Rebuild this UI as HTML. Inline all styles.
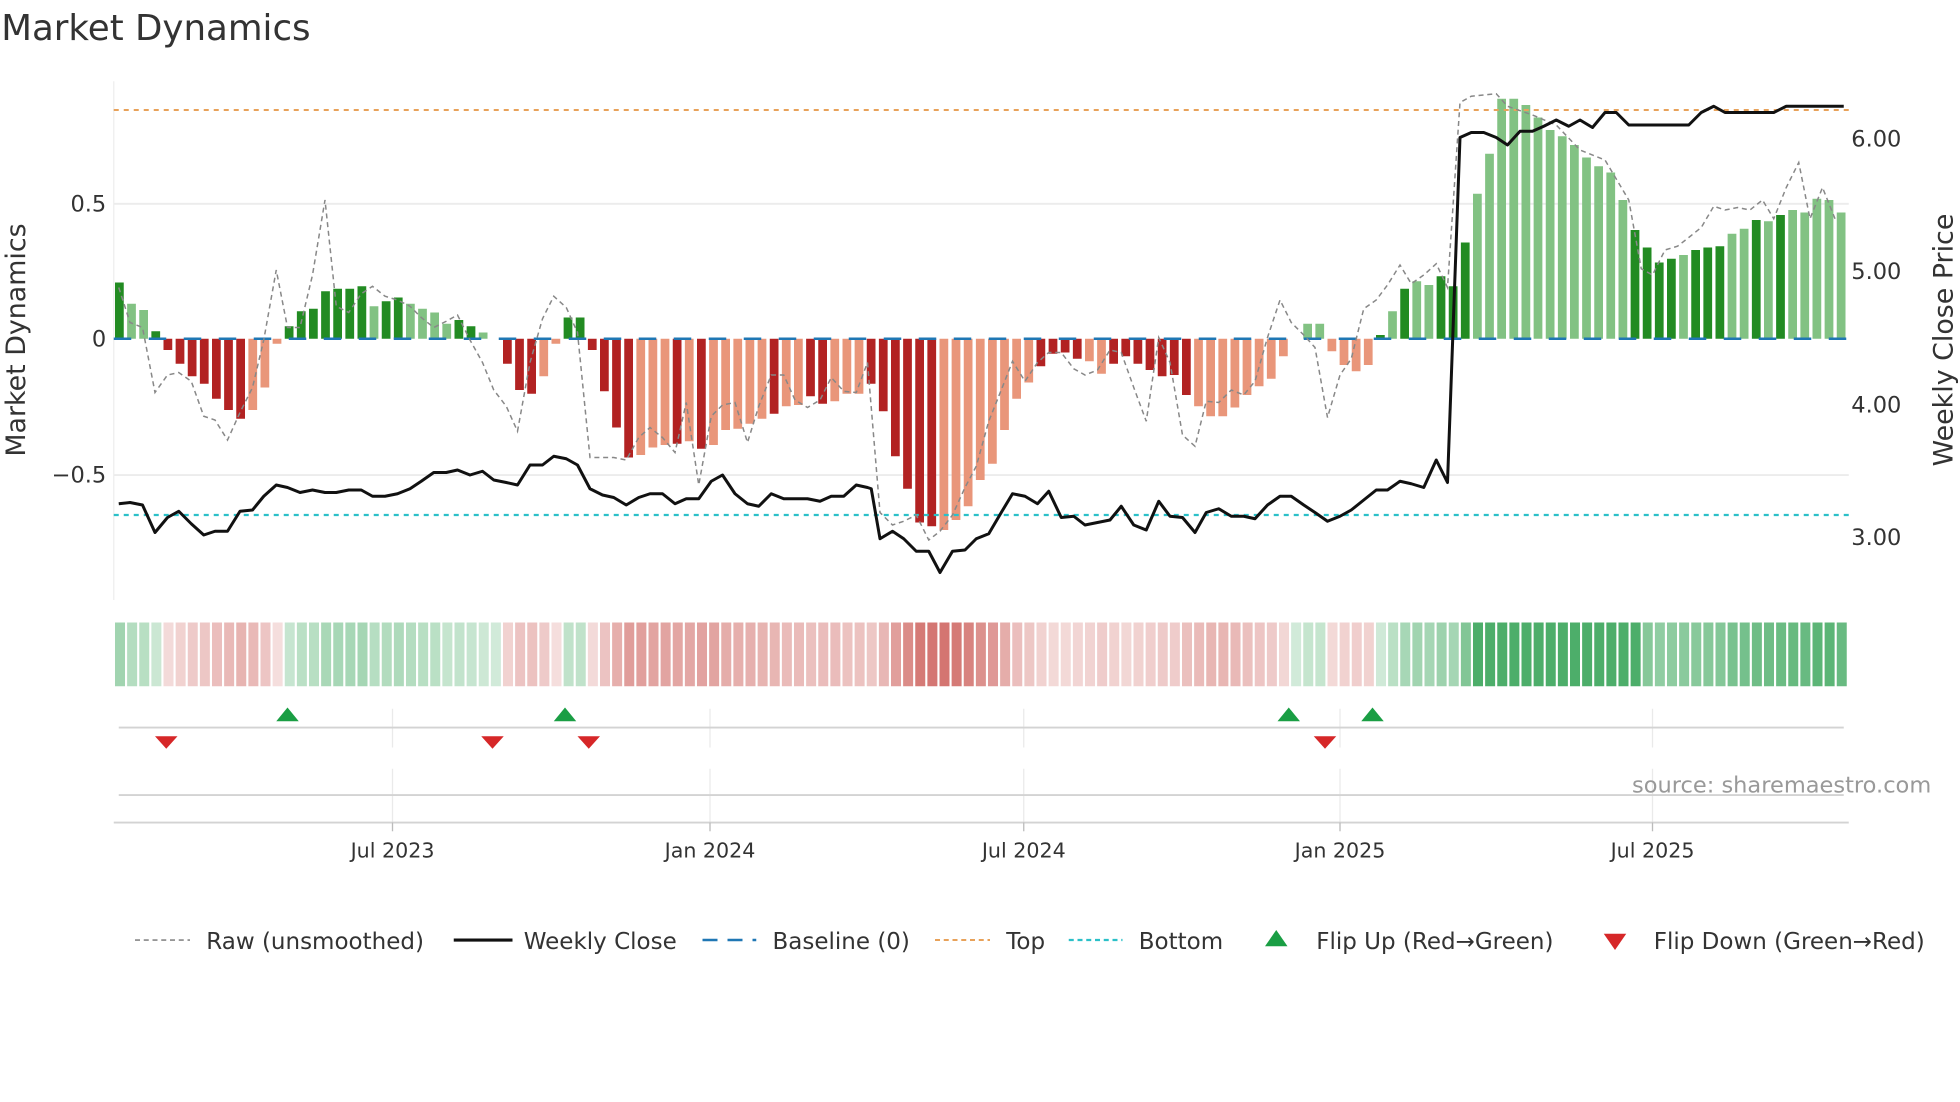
<!DOCTYPE html>
<html><head><meta charset="utf-8"><style>
html,body{margin:0;padding:0;background:#fff;}
svg{display:block;font-family:"DejaVu Sans","Liberation Sans",sans-serif;}
</style></head><body>
<svg id="s" width="1960" height="1102" viewBox="0 0 1568 881.6" xmlns="http://www.w3.org/2000/svg">
<rect width="1568" height="881.6" fill="#fff"/>
<text x="1" y="32" font-size="28.5" fill="#333">Market Dynamics</text>
<g id="g"></g>
</svg>
<script>
var g=document.getElementById('g'),h='';
function L(s){h+=s;}
L('<line x1="91" y1="65" x2="91" y2="480" stroke="#eee"/>');
[163,380].forEach(function(y){L('<line x1="91" y1="'+y+'" x2="1479" y2="'+y+'" stroke="#ececec" stroke-width="1.5"/>');});
var vals=[45,28,23,6,-9,-20,-30,-36,-48,-57,-64,-57,-39,-4,10,22,24,38,40,40,42,26,30,33,28,24,21,12,15,10,5,0,-20,-41,-44,-30,-4,17,17,-9,-42,-71,-95,-93,-87,-85,-84,-82,-88,-85,-73,-72,-68,-64,-60,-54,-53,-46,-52,-50,-44,-44,-36,-58,-94,-120,-147,-150,-153,-145,-134,-113,-100,-73,-48,-35,-22,-12,-11,-16,-18,-28,-20,-14,-20,-25,-30,-29,-45,-54,-62,-62,-55,-45,-38,-32,-14,0,12,12,-10,-21,-26,-21,3,22,40,46,43,50,42,77,116,148,192,192,187,177,167,162,155,145,138,133,111,87,73,61,64,67,71,73,74,84,88,95,94,99,103,101,112,111,101];
var col="GggGRRRRRRRrrrGGGGGGGgGGggggGGggRRRrrGGRRRRrrrRrRrrrrrRrrRRrrrRRRRRRrrrrrrrrRRRRrrRRRRRRRrrrrrrGGRRRrGgGGgGggGGGgggggggggggggGGGGgGGGggGgGgg";
for(var i=0;i<vals.length;i++){var x=92+9.7*i,v=vals[i];var a=Math.min(1,0.22+0.75*Math.abs(v)/150);
var c=v>=0?'rgba(46,160,80,'+a.toFixed(2)+')':'rgba(200,80,75,'+(a*0.8).toFixed(2)+')';
if(i>=112&&i<=125)c='rgba(46,160,80,0.85)';
L('<rect x="'+x.toFixed(1)+'" y="498" width="8" height="51" fill="'+c+'"/>');}
for(var i=0;i<vals.length;i++){var x=92+9.7*i,v=vals[i];if(v==0)continue;var k=col[i]||'g';
var f={G:'#228b22',g:'#82c283',R:'#b22222',r:'#e9967a'}[k];
if(v>0&&(k=='R'||k=='r'))f='#82c283';if(v<0&&(k=='G'||k=='g'))f='#e9967a';
L('<rect x="'+x.toFixed(1)+'" y="'+(v>0?271-v:271)+'" width="7" height="'+Math.abs(v)+'" fill="'+f+'"/>');}
L('<line x1="91" y1="271" x2="1479" y2="271" stroke="#1f77b4" stroke-width="2" stroke-dasharray="14,14"/>');
L('<line x1="91" y1="88" x2="1479" y2="88" stroke="#e8a25a" stroke-width="1.6" stroke-dasharray="4,4"/>');
L('<line x1="91" y1="412" x2="1479" y2="412" stroke="#2bc0c8" stroke-width="1.8" stroke-dasharray="4,4"/>');
var raw=[[95,230],[104,258],[114,262],[124,314],[134,300],[143,298],[153,305],[163,333],[172,336],[182,352],[192,330],[202,310],[211,272],[221,216],[230,262],[240,262],[250,220],[260,160],[269,245],[279,250],[289,235],[298,229],[308,237],[318,240],[328,245],[337,254],[347,262],[357,257],[366,252],[376,272],[386,290],[395,312],[405,325],[414,345],[424,290],[434,255],[443,237],[453,246],[462,266],[472,366],[482,366],[491,366],[501,368],[511,350],[520,342],[530,350],[540,362],[549,322],[559,388],[569,333],[578,324],[588,322],[598,354],[607,325],[617,300],[627,300],[636,320],[646,326],[656,320],[665,302],[675,313],[685,314],[694,290],[704,410],[714,420],[723,417],[733,412],[743,432],[752,425],[762,412],[772,390],[781,373],[791,337],[801,312],[810,289],[820,305],[830,290],[839,282],[849,282],[859,295],[868,300],[878,296],[888,280],[897,282],[907,310],[917,337],[927,270],[936,290],[946,348],[956,357],[965,321],[975,322],[985,312],[995,316],[1004,305],[1014,270],[1024,240],[1033,258],[1043,268],[1052,278],[1062,334],[1072,300],[1081,287],[1091,247],[1101,240],[1110,228],[1120,212],[1129,227],[1139,220],[1149,211],[1158,230],[1168,82],[1177,77],[1187,76],[1197,75],[1206,85],[1226,92],[1245,100],[1264,120],[1284,128],[1303,160],[1313,215],[1322,220],[1332,200],[1342,197],[1351,190],[1361,182],[1371,165],[1380,168],[1390,166],[1400,168],[1410,160],[1419,175],[1429,150],[1439,130],[1448,175],[1458,150],[1468,175]];
L('<polyline fill="none" stroke="#888" stroke-width="1.2" stroke-dasharray="4,3" points="'+raw.join(' ')+'"/>');
var pr=[[95,403],[104,402],[114,404],[124,426],[134,414],[143,409],[153,419],[163,428],[172,425],[182,425],[192,409],[202,408],[211,397],[221,388],[230,390],[240,394],[250,392],[260,394],[269,394],[279,392],[289,392],[298,397],[308,397],[318,395],[328,391],[337,385],[347,378],[357,378],[366,376],[376,380],[386,377],[395,384],[405,386],[414,388],[424,372],[434,372],[443,365],[453,367],[462,372],[472,391],[482,396],[491,398],[501,404],[511,398],[520,395],[530,395],[540,403],[549,399],[559,399],[569,385],[578,380],[588,395],[598,403],[607,405],[617,395],[627,399],[636,399],[646,399],[656,401],[665,397],[675,397],[685,388],[694,390],[697,391],[704,431],[714,425],[723,431],[733,441],[743,441],[752,458],[762,441],[772,440],[781,431],[791,427],[801,410],[810,395],[820,397],[830,403],[839,393],[849,414],[859,413],[868,420],[878,418],[888,416],[897,405],[907,420],[917,424],[927,401],[936,413],[946,414],[956,426],[965,410],[975,407],[985,413],[995,413],[1004,415],[1014,404],[1024,397],[1033,397],[1043,404],[1052,410],[1062,417],[1072,413],[1081,408],[1091,400],[1101,392],[1110,392],[1120,385],[1129,387],[1139,390],[1149,368],[1158,386],[1168,110],[1177,106],[1187,106],[1197,110],[1206,116],[1216,105],[1226,105],[1235,101],[1245,96],[1255,101],[1264,96],[1274,102],[1284,90],[1293,90],[1303,100],[1313,100],[1351,100],[1361,90],[1371,85],[1380,90],[1419,90],[1429,85],[1475,85]];
L('<polyline fill="none" stroke="#111" stroke-width="2.4" stroke-linejoin="round" points="'+pr.join(' ')+'"/>');
L('<g font-size="18" fill="#333"><text x="85" y="169" text-anchor="end">0.5</text><text x="85" y="277" text-anchor="end">0</text><text x="85" y="386" text-anchor="end">−0.5</text>');
[['6.00',117],['5.00',223],['4.00',330],['3.00',436]].forEach(function(t){L('<text x="1481" y="'+t[1]+'">'+t[0]+'</text>');});
L('</g>');
L('<text transform="translate(20,272) rotate(-90)" text-anchor="middle" font-size="21.5" fill="#333">Market Dynamics</text>');
L('<text transform="translate(1562,272) rotate(-90)" text-anchor="middle" font-size="21.5" fill="#333">Weekly Close Price</text>');
[314,568,819,1072,1322].forEach(function(x){L('<line x1="'+x+'" y1="567" x2="'+x+'" y2="598" stroke="#eaeaea"/><line x1="'+x+'" y1="615" x2="'+x+'" y2="665" stroke="#eaeaea"/>');});
L('<line x1="95" y1="582" x2="1475" y2="582" stroke="#d3d3d3" stroke-width="1.5"/><line x1="95" y1="636" x2="1475" y2="636" stroke="#d3d3d3" stroke-width="1.5"/><line x1="91" y1="658" x2="1479" y2="658" stroke="#d3d3d3" stroke-width="1.5"/>');
[230,452,1031,1098].forEach(function(x){L('<polygon points="'+(x-9)+',577 '+(x+9)+',577 '+x+',566" fill="#1a9e44"/>');});
[133,394,471,1060].forEach(function(x){L('<polygon points="'+(x-9)+',589 '+(x+9)+',589 '+x+',599" fill="#d62728"/>');});
L('<g font-size="16.5" fill="#333" text-anchor="middle">');
[['Jul 2023',314],['Jan 2024',568],['Jul 2024',819],['Jan 2025',1072],['Jul 2025',1322]].forEach(function(t){L('<line x1="'+t[1]+'" y1="658" x2="'+t[1]+'" y2="665" stroke="#bbb"/><text x="'+t[1]+'" y="686">'+t[0]+'</text>');});
L('</g>');
L('<text x="1545" y="634" text-anchor="end" font-size="18" fill="#999">source: sharemaestro.com</text>');
L('<g font-size="18.4" fill="#333">');
L('<line x1="108" y1="752" x2="152" y2="752" stroke="#888" stroke-width="1.3" stroke-dasharray="4,3"/><text x="165" y="759">Raw (unsmoothed)</text>');
L('<line x1="363" y1="752" x2="410" y2="752" stroke="#111" stroke-width="2.5"/><text x="419" y="759">Weekly Close</text>');
L('<line x1="562" y1="752" x2="605" y2="752" stroke="#1f77b4" stroke-width="2" stroke-dasharray="12,8"/><text x="618" y="759">Baseline (0)</text>');
L('<line x1="748" y1="752" x2="792" y2="752" stroke="#e8a25a" stroke-width="1.6" stroke-dasharray="4,3"/><text x="805" y="759">Top</text>');
L('<line x1="855" y1="752" x2="898" y2="752" stroke="#2bc0c8" stroke-width="1.8" stroke-dasharray="4,3"/><text x="911" y="759">Bottom</text>');
L('<polygon points="1012,757 1030,757 1021,744" fill="#1a9e44"/><text x="1053" y="759">Flip Up (Red→Green)</text>');
L('<polygon points="1283,747 1301,747 1292,760" fill="#d62728"/><text x="1323" y="759">Flip Down (Green→Red)</text>');
L('</g>');
g.innerHTML=h;
</script>
</body></html>
